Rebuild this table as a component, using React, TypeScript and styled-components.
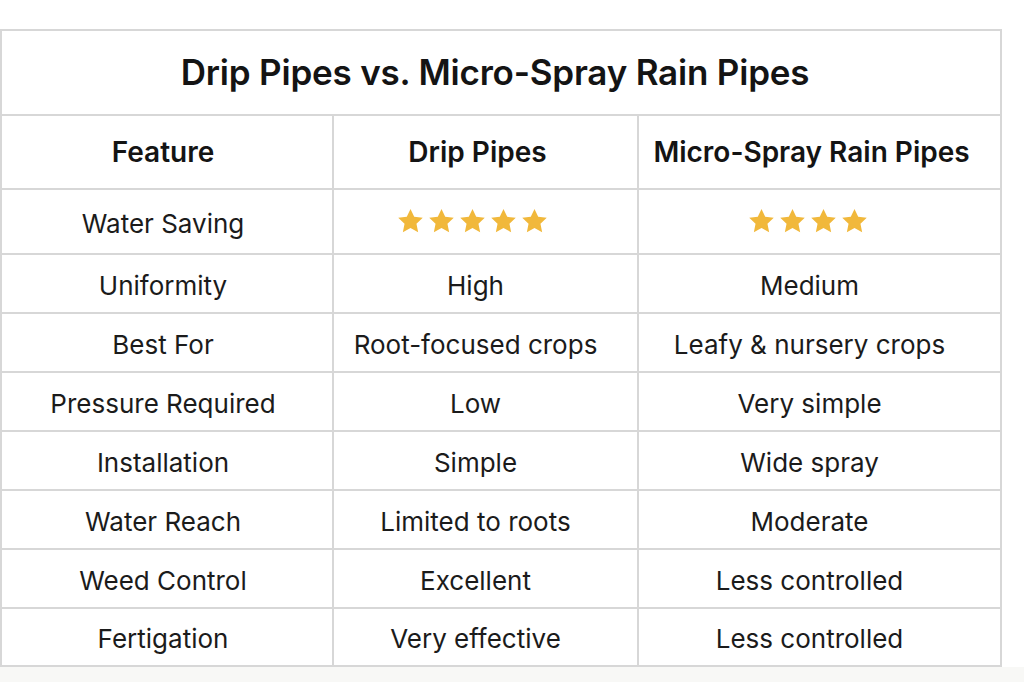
import React from "react";
import styled, { createGlobalStyle } from "styled-components";

const GlobalStyle = createGlobalStyle`
  html, body {
    margin: 0;
    padding: 0;
    background: #ffffff;
  }
  body {
    font-family: Inter, "Noto Sans", "Liberation Sans", sans-serif;
    color: #1b1b1b;
  }
`;

const Page = styled.div`
  width: 1024px;
  height: 682px;
  display: flex;
  flex-direction: column;
  overflow: hidden;
  background: #ffffff;
`;

const TableWrap = styled.div`
  padding-top: 29px;
  background: #ffffff;
`;

const Footer = styled.div`
  flex: 1;
  background: #f8f8f6;
`;

const Table = styled.table`
  border-collapse: collapse;
  width: 1000px;
  table-layout: fixed;
`;

const TitleCell = styled.th`
  height: 81px;
  padding: 0 12px 2px 0;
  border: 2px solid #d7d7d7;
  font-size: 35px;
  font-weight: 600;
  letter-spacing: -0.2px;
  text-align: center;
  vertical-align: middle;
  color: #141414;
`;

const HeadCell = styled.th<{ $shift: number }>`
  height: 72px;
  padding: 0 ${(p) => p.$shift}px 0 0;
  border: 2px solid #d7d7d7;
  font-size: 28px;
  font-weight: 600;
  text-align: center;
  vertical-align: middle;
  color: #141414;
`;

const Row = styled.tr<{ $h: number }>`
  height: ${(p) => p.$h}px;
`;

const Cell = styled.td<{ $shift: number }>`
  padding: 3px ${(p) => p.$shift}px 0 0;
  border: 2px solid #d7d7d7;
  font-size: 26px;
  font-weight: 400;
  text-align: center;
  vertical-align: middle;
  color: #1b1b1b;
`;

const Stars = styled.div`
  display: inline-flex;
  gap: 4px;
  align-items: center;
  justify-content: center;
  padding-top: 1px;
`;

const StarIcon = () => (
  <svg width="27" height="26" viewBox="0 0 24 23" aria-hidden="true">
    <path
      d="M12 0.8l3.3 7 7.6 0.9-5.6 5.2 1.5 7.6L12 17.7l-6.8 3.8 1.5-7.6L1.1 8.7l7.6-0.9z"
      fill="#f1b83b"
    />
  </svg>
);

const StarRow = ({ n }: { n: number }) => (
  <Stars>
    {Array.from({ length: n }).map((_, i) => (
      <StarIcon key={i} />
    ))}
  </Stars>
);

const rows: { f: string; d: React.ReactNode; m: React.ReactNode; h: number }[] = [
  { f: "Water Saving", d: <StarRow n={5} />, m: <StarRow n={4} />, h: 65 },
  { f: "Uniformity", d: "High", m: "Medium", h: 59 },
  { f: "Best For", d: "Root-focused crops", m: "Leafy & nursery crops", h: 59 },
  { f: "Pressure Required", d: "Low", m: "Very simple", h: 59 },
  { f: "Installation", d: "Simple", m: "Wide spray", h: 59 },
  { f: "Water Reach", d: "Limited to roots", m: "Moderate", h: 59 },
  { f: "Weed Control", d: "Excellent", m: "Less controlled", h: 59 },
  { f: "Fertigation", d: "Very effective", m: "Less controlled", h: 58 },
];

const headShifts = [8, 16, 16];
const bodyShifts = [8, 20, 20];

export default function App() {
  return (
    <>
      <GlobalStyle />
      <Page>
        <TableWrap>
          <Table>
            <colgroup>
              <col style={{ width: 332 }} />
              <col style={{ width: 305 }} />
              <col style={{ width: 363 }} />
            </colgroup>
            <thead>
              <tr>
                <TitleCell colSpan={3}>Drip Pipes vs. Micro-Spray Rain Pipes</TitleCell>
              </tr>
              <tr>
                <HeadCell $shift={headShifts[0]}>Feature</HeadCell>
                <HeadCell $shift={headShifts[1]}>Drip Pipes</HeadCell>
                <HeadCell $shift={headShifts[2]}>Micro-Spray Rain Pipes</HeadCell>
              </tr>
            </thead>
            <tbody>
              {rows.map((r) => (
                <Row key={r.f} $h={r.h}>
                  <Cell $shift={bodyShifts[0]}>{r.f}</Cell>
                  <Cell $shift={bodyShifts[1] + (typeof r.d === "string" ? 0 : 6)}>{r.d}</Cell>
                  <Cell $shift={bodyShifts[2] + (typeof r.m === "string" ? 0 : 4)}>{r.m}</Cell>
                </Row>
              ))}
            </tbody>
          </Table>
        </TableWrap>
        <Footer />
      </Page>
    </>
  );
}
